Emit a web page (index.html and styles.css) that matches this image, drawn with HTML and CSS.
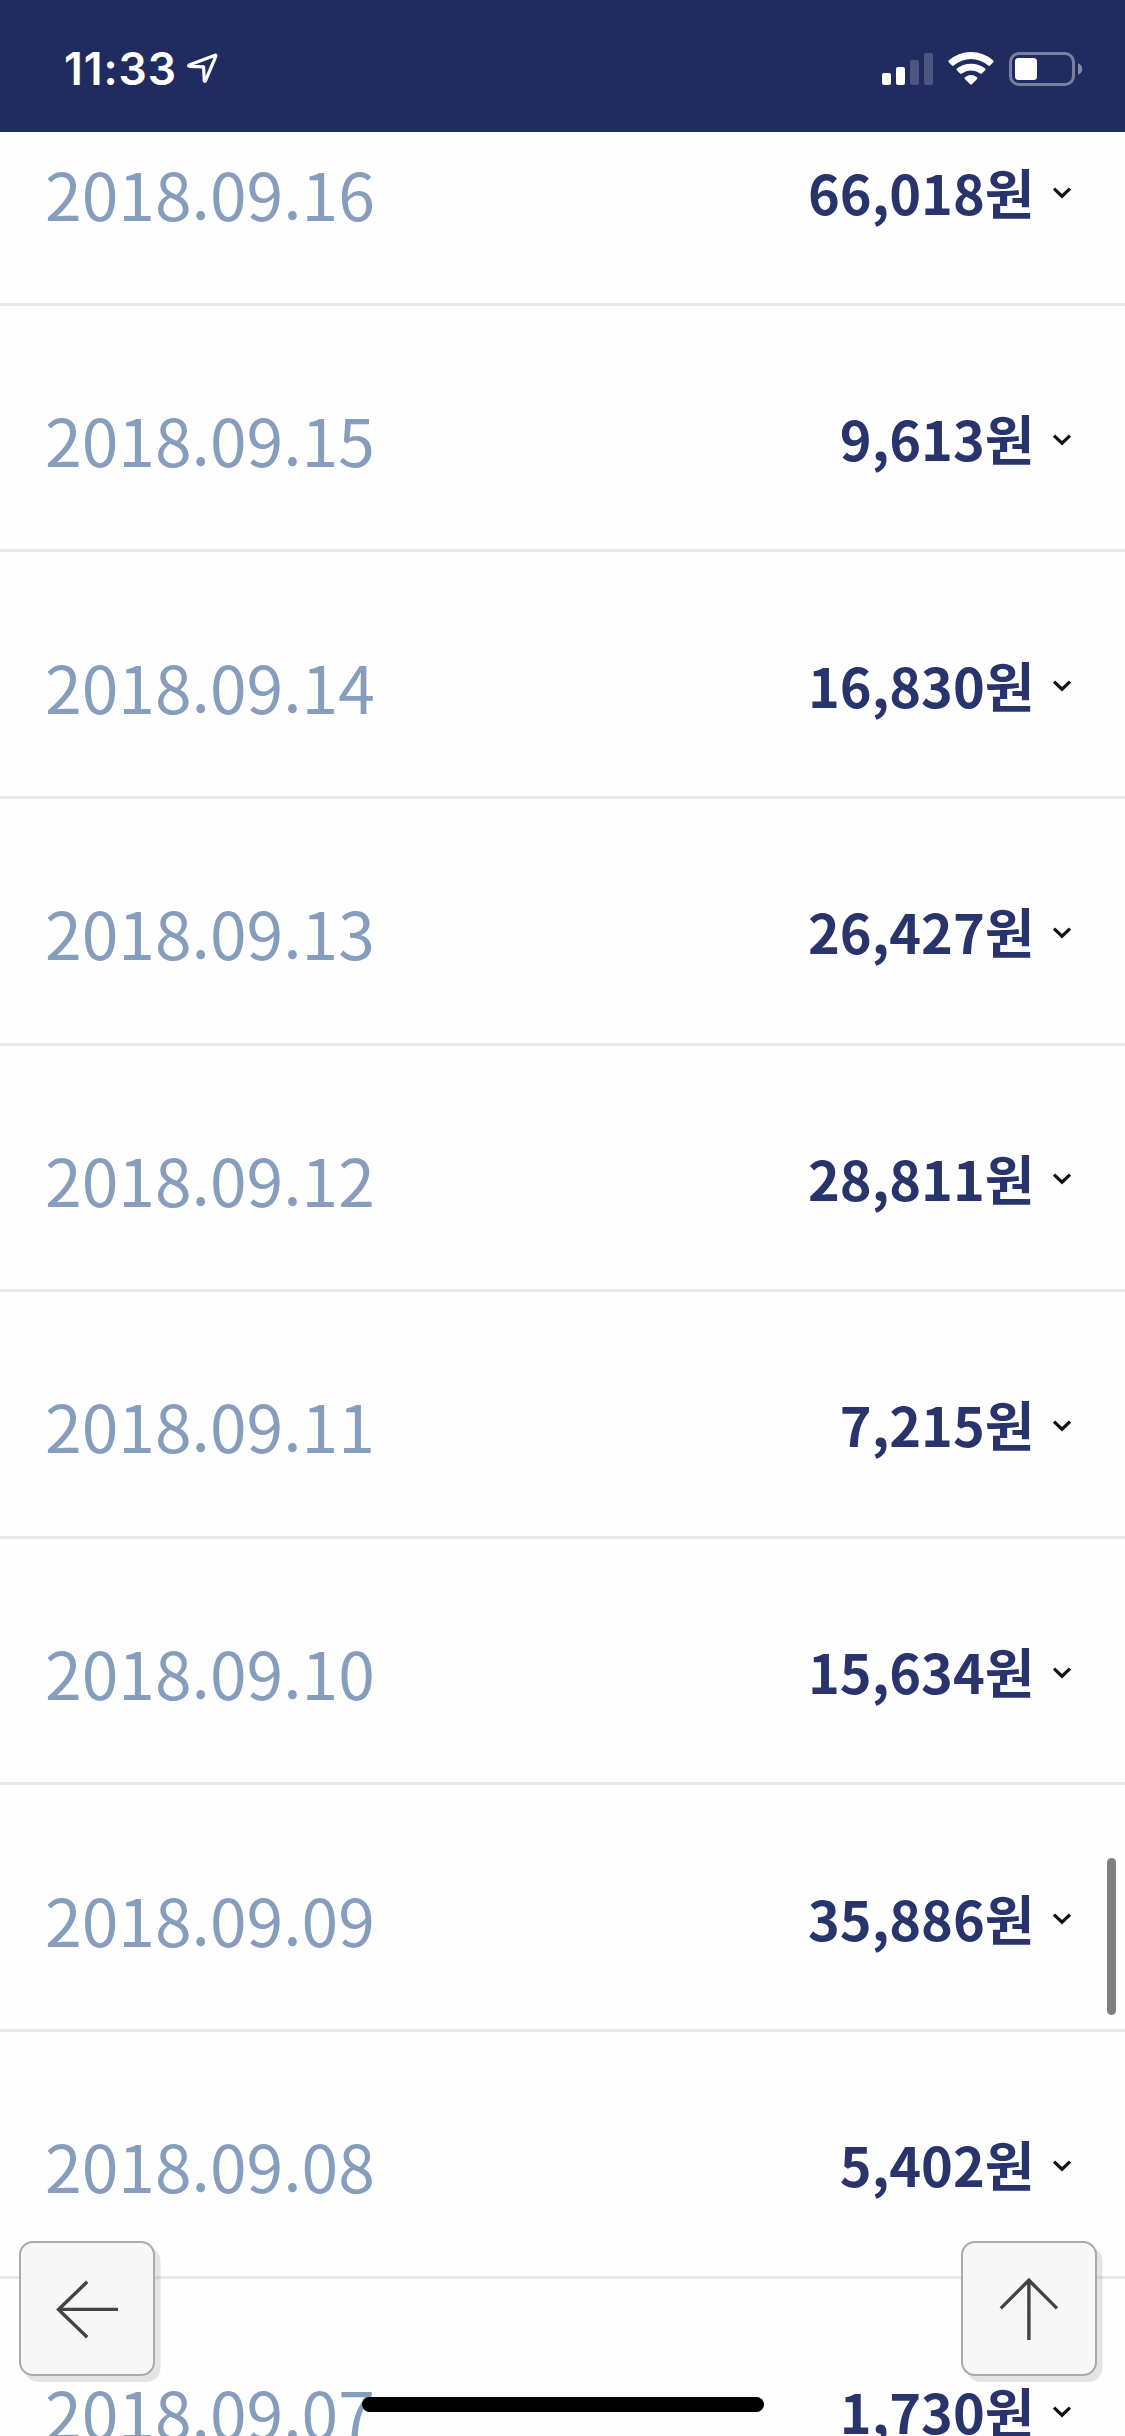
FILE: index.html
```
<!DOCTYPE html>
<html lang="ko">
<head>
<meta charset="utf-8">
<title>2018.09</title>
<link rel="stylesheet" href="styles.css">
</head>
<body>
<svg width="0" height="0" class="defs" aria-hidden="true">
  <symbol id="chevron" viewBox="0 0 20 14"><path d="M2 2.600 10 10.200 18 2.600" fill="none" stroke="#111" stroke-width="3.200"/></symbol>
</svg>
<header class="status">
  <div class="status-left">
    <span class="clock">11:33</span>
    <svg class="location" width="32" height="32" viewBox="0 0 32 32"><path d="M28.2 2.2 2.2 12.1q-1.2.9.3 1.2L16.6 13.9 17.2 27.5q.5 1.6 1.3.2L28.8 3.4q.3-1.4-.6-1.2Z" fill="none" stroke="#fff" stroke-width="3.2" stroke-linejoin="round"/></svg>
  </div>
  <svg class="indicators" width="204" height="36" viewBox="0 0 204 36">
    <g fill="#fff">
      <rect x="2" y="22" width="9" height="12" rx="2"/>
      <rect x="16" y="16" width="9" height="18" rx="2"/>
      <rect x="30" y="9" width="9" height="25" rx="2" opacity=".2"/>
      <rect x="44" y="2" width="9" height="32" rx="2" opacity=".2"/>
      <path d="M68.7 9.6Q78.200 1 91 1t22.300 8.600q.8.900 0 1.700l-3.300 3.300q-.8.700-1.700 0Q100.500 7.900 91 7.900T73.700 14.600q-.9.700-1.700 0l-3.300-3.300q-.8-.8 0-1.700Z"/>
      <path d="M76.800 17.600Q82.800 12.700 91 12.700t14.200 4.900q.8.900 0 1.700l-3.300 3.200q-.8.800-1.700.1Q96.200 19.600 91 19.600t-9.200 3q-.9.700-1.700-.1l-3.300-3.200q-.8-.8 0-1.700Z"/>
      <path d="M85 26.200Q91 22 97 26.200q1 .8.100 1.700L91.900 33.200q-.9.700-1.800 0L84.900 27.900q-.9-.9.100-1.700Z"/>
      <path d="M198 12.200q4.200 1.600 4.200 5.800t-4.200 5.800Z" opacity=".45"/>
      <rect x="135" y="7" width="22" height="22" rx="3.500"/>
    </g>
    <rect x="130.500" y="2.500" width="63" height="31" rx="8.500" fill="none" stroke="#fff" stroke-opacity=".4" stroke-width="3"/>
  </svg>
</header>
<main class="viewport">
  <ul class="list">
    <li class="row"><span class="date">2018.09.16</span><span class="amount">66,018원</span><svg class="chevron"><use href="#chevron"/></svg></li>
    <li class="row"><span class="date">2018.09.15</span><span class="amount">9,613원</span><svg class="chevron"><use href="#chevron"/></svg></li>
    <li class="row"><span class="date">2018.09.14</span><span class="amount">16,830원</span><svg class="chevron"><use href="#chevron"/></svg></li>
    <li class="row"><span class="date">2018.09.13</span><span class="amount">26,427원</span><svg class="chevron"><use href="#chevron"/></svg></li>
    <li class="row"><span class="date">2018.09.12</span><span class="amount">28,811원</span><svg class="chevron"><use href="#chevron"/></svg></li>
    <li class="row"><span class="date">2018.09.11</span><span class="amount">7,215원</span><svg class="chevron"><use href="#chevron"/></svg></li>
    <li class="row"><span class="date">2018.09.10</span><span class="amount">15,634원</span><svg class="chevron"><use href="#chevron"/></svg></li>
    <li class="row"><span class="date">2018.09.09</span><span class="amount">35,886원</span><svg class="chevron"><use href="#chevron"/></svg></li>
    <li class="row"><span class="date">2018.09.08</span><span class="amount">5,402원</span><svg class="chevron"><use href="#chevron"/></svg></li>
    <li class="row"><span class="date">2018.09.07</span><span class="amount">1,730원</span><svg class="chevron"><use href="#chevron"/></svg></li>
  </ul>
</main>
<button class="fab fab-back" aria-label="뒤로"><svg width="131" height="131" viewBox="0 0 131 131"><path d="M66.200 38.800 37.500 66.400 66.200 94.200M38 66.400H97" fill="none" stroke="#444" stroke-width="3.400"/></svg></button>
<button class="fab fab-top" aria-label="위로"><svg width="131" height="131" viewBox="0 0 131 131"><path d="M37.800 65.400 65.900 37.200 94 65.400M65.900 38V97" fill="none" stroke="#444" stroke-width="3.400"/></svg></button>
<div class="scrollbar"></div>
<div class="home-indicator"></div>
</body>
</html>
```

FILE: styles.css
```
* { box-sizing: border-box; }

body {
  margin: 0;
  height: 2436px;
  position: relative;
  overflow: hidden;
  display: flex;
  flex-direction: column;
  background: #fefefe;
  font-family: "Noto Sans CJK KR", sans-serif;
}

.defs { position: absolute; }

.status {
  flex: none;
  height: 132px;
  padding: 51px 41px 0 64px;
  display: flex;
  justify-content: space-between;
  align-items: flex-start;
  background: #202c60;
  color: #fff;
}

.status-left {
  display: flex;
  align-items: flex-start;
  gap: 11px;
}

.clock {
  width: 112px;
  font: 600 44.5px/36px "Inter", sans-serif;
  letter-spacing: 0.9px;
  white-space: nowrap;
}

.location { margin-top: 2px; }

.viewport {
  flex: 1;
  min-height: 0;
  overflow: hidden;
}

.list {
  list-style: none;
  margin: -72.8px 0 0;
  padding: 0;
}

.row {
  height: 246.6px;
  padding: 0 53px 0 45px;
  display: flex;
  align-items: center;
  border-bottom: 3px solid #e8e8e8;
}

.date {
  flex: 1;
  padding-top: 21px;
  font-size: 66px;
  line-height: 80px;
  color: #869dbe;
}

.amount {
  padding-top: 21px;
  font-size: 54px;
  font-weight: 700;
  line-height: 80px;
  color: #28346b;
}

.chevron {
  width: 20px;
  height: 14px;
  margin: 24px 0 0 17.5px;
}

.fab {
  position: absolute;
  top: 2241px;
  width: 135.5px;
  height: 135px;
  padding: 0;
  border: 2px solid #aaa;
  border-radius: 14px;
  background: #f7f7f7;
  box-shadow: 5.5px 6px 0 rgba(0, 0, 0, 0.1);
}

.fab svg { display: block; }
.fab-back { left: 19px; }
.fab-top { left: 961px; }

.scrollbar {
  position: absolute;
  top: 1858px;
  left: 1107px;
  width: 9px;
  height: 157px;
  border-radius: 4.5px;
  background: #808080;
}

.home-indicator {
  position: absolute;
  top: 2397px;
  left: 362px;
  width: 402px;
  height: 15px;
  border-radius: 7.5px;
  background: #000;
}
```
